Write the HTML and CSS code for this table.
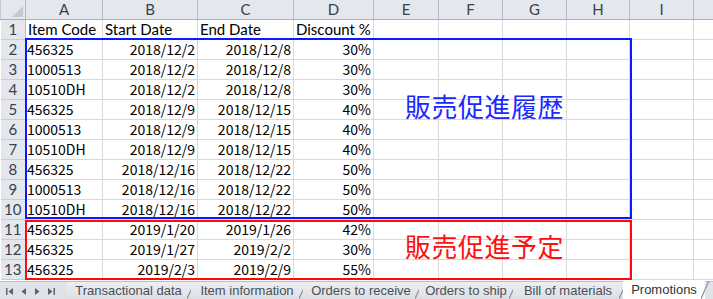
FILE: index.html
```html
<!DOCTYPE html>
<html>
<head>
<meta charset="utf-8">
<link rel="stylesheet" href="styles.css">
</head>
<body>
<div class="sheet">
  <table class="grid">
    <colgroup>
      <col class="w-rh"><col class="w-a"><col class="w-b"><col class="w-c"><col class="w-d"><col class="w-e"><col class="w-f"><col class="w-g"><col class="w-h"><col class="w-i"><col class="w-j">
    </colgroup>
    <thead>
      <tr class="colhead">
        <th class="corner"><span class="tri"></span></th><th>A</th><th>B</th><th>C</th><th>D</th><th>E</th><th>F</th><th>G</th><th>H</th><th>I</th><th class="last"></th>
      </tr>
    </thead>
    <tbody>
      <tr><th>1</th><td class="hd">Item Code</td><td class="hd">Start Date</td><td class="hd">End Date</td><td class="hd">Discount %</td><td></td><td></td><td></td><td></td><td></td><td></td></tr>
      <tr><th>2</th><td>456325</td><td class="r">2018/12/2</td><td class="r">2018/12/8</td><td class="r">30%</td><td></td><td></td><td></td><td></td><td></td><td></td></tr>
      <tr><th>3</th><td>1000513</td><td class="r">2018/12/2</td><td class="r">2018/12/8</td><td class="r">30%</td><td></td><td></td><td></td><td></td><td></td><td></td></tr>
      <tr><th>4</th><td>10510DH</td><td class="r">2018/12/2</td><td class="r">2018/12/8</td><td class="r">30%</td><td></td><td></td><td></td><td></td><td></td><td></td></tr>
      <tr><th>5</th><td>456325</td><td class="r">2018/12/9</td><td class="r">2018/12/15</td><td class="r">40%</td><td></td><td></td><td></td><td></td><td></td><td></td></tr>
      <tr><th>6</th><td>1000513</td><td class="r">2018/12/9</td><td class="r">2018/12/15</td><td class="r">40%</td><td></td><td></td><td></td><td></td><td></td><td></td></tr>
      <tr><th>7</th><td>10510DH</td><td class="r">2018/12/9</td><td class="r">2018/12/15</td><td class="r">40%</td><td></td><td></td><td></td><td></td><td></td><td></td></tr>
      <tr><th>8</th><td>456325</td><td class="r">2018/12/16</td><td class="r">2018/12/22</td><td class="r">50%</td><td></td><td></td><td></td><td></td><td></td><td></td></tr>
      <tr><th>9</th><td>1000513</td><td class="r">2018/12/16</td><td class="r">2018/12/22</td><td class="r">50%</td><td></td><td></td><td></td><td></td><td></td><td></td></tr>
      <tr><th>10</th><td>10510DH</td><td class="r">2018/12/16</td><td class="r">2018/12/22</td><td class="r">50%</td><td></td><td></td><td></td><td></td><td></td><td></td></tr>
      <tr><th>11</th><td>456325</td><td class="r">2019/1/20</td><td class="r">2019/1/26</td><td class="r">42%</td><td></td><td></td><td></td><td></td><td></td><td></td></tr>
      <tr><th>12</th><td>456325</td><td class="r">2019/1/27</td><td class="r">2019/2/2</td><td class="r">30%</td><td></td><td></td><td></td><td></td><td></td><td></td></tr>
      <tr><th>13</th><td>456325</td><td class="r">2019/2/3</td><td class="r">2019/2/9</td><td class="r">55%</td><td></td><td></td><td></td><td></td><td></td><td></td></tr>
    </tbody>
  </table>

  <div class="box box-blue"><span class="label label-blue">販売促進履歴</span></div>
  <div class="box box-red"><span class="label label-red">販売促進予定</span></div>

  <div class="tabbar">
    <div class="nav">
      <span class="nav-btn">
        <svg width="9" height="9" viewBox="0 0 9 9"><rect x="1" y="1" width="1.5" height="7" fill="#5a6470"/><path d="M8 1 L3.5 4.5 L8 8 Z" fill="#5a6470"/></svg>
      </span>
      <span class="nav-btn">
        <svg width="9" height="9" viewBox="0 0 9 9"><path d="M7 1 L2.5 4.5 L7 8 Z" fill="#5a6470"/></svg>
      </span>
      <span class="nav-btn">
        <svg width="9" height="9" viewBox="0 0 9 9"><path d="M2 1 L6.5 4.5 L2 8 Z" fill="#5a6470"/></svg>
      </span>
      <span class="nav-btn">
        <svg width="9" height="9" viewBox="0 0 9 9"><path d="M1 1 L5.5 4.5 L1 8 Z" fill="#5a6470"/><rect x="6.5" y="1" width="1.5" height="7" fill="#5a6470"/></svg>
      </span>
    </div>
    <div class="tabs">
      <span class="tab t1">Transactional data</span>
      <span class="tab t2">Item information</span>
      <span class="tab t3">Orders to receive</span>
      <span class="tab t4">Orders to ship</span>
      <span class="tab t5">Bill of materials</span>
      <span class="tab active">Promotions</span>
    </div>
  </div>
</div>
</body>
</html>
```
FILE: styles.css
```css
html, body {
  margin: 0;
  padding: 0;
  background: #ffffff;
}
.sheet {
  position: relative;
  width: 713px;
  height: 299px;
  overflow: hidden;
  font-family: "Noto Sans CJK JP", "DejaVu Sans", sans-serif;
}
.grid {
  border-collapse: collapse;
  table-layout: fixed;
  width: 733px;
}
.w-rh { width: 25px; }
.w-a { width: 77px; }
.w-b { width: 95px; }
.w-c { width: 96px; }
.w-d { width: 80px; }
.w-e { width: 65px; }
.w-f { width: 64px; }
.w-g { width: 64px; }
.w-h { width: 63px; }
.w-i { width: 64px; }
.w-j { width: 40px; }

.grid th, .grid td {
  height: 19px;
  padding: 0;
  border: 1px solid #d9d9d9;
  overflow: hidden;
  white-space: nowrap;
}
.grid td {
  font-size: 14px;
  line-height: 19px;
  color: #000;
  padding-left: 1px;
  padding-right: 2px;
}
.grid td.r {
  text-align: right;
}
.grid td.hd {
  font-family: "Lato", "Open Sans", sans-serif;
  font-size: 15px;
  padding-left: 2px;
}
.grid th {
  background: #e4e8ee;
  border-color: #b4bcc8;
  font-family: "Lato", "Open Sans", sans-serif;
  font-weight: normal;
  font-size: 15px;
  line-height: 19px;
  color: #3a3f48;
  text-align: center;
}
.grid tbody th {
  border-top-color: #c6ccd6;
  border-bottom-color: #c6ccd6;
  border-left: none;
}
.grid thead th {
  border-top: none;
  border-left-color: #c6ccd6;
  border-right-color: #b4bcc8;
  border-bottom-color: #a9b0bc;
}
.corner {
  position: relative;
}
.tri {
  position: absolute;
  right: 2px;
  bottom: 2px;
  width: 0;
  height: 0;
  border-left: 11px solid transparent;
  border-bottom: 11px solid #c4c9d2;
}

.box {
  position: absolute;
  box-sizing: border-box;
  border: 2px solid;
  display: flex;
  align-items: flex-start;
}
.box-blue {
  left: 25px;
  top: 38px;
  width: 607px;
  height: 181px;
  border-color: #0a1aff;
}
.box-red {
  left: 25px;
  top: 220px;
  width: 607px;
  height: 60px;
  border-color: #ff0a0a;
}
.label {
  margin-left: 378px;
  font-family: "Noto Sans CJK JP", sans-serif;
  font-size: 26px;
  line-height: 30px;
  letter-spacing: 0.5px;
}
.label-blue {
  color: #1a2aff;
  margin-top: 51px;
}
.label-red {
  color: #ff1010;
  margin-top: 9px;
}

.tabbar {
  position: absolute;
  left: 0;
  top: 281px;
  width: 713px;
  height: 18px;
  background: #dfe2e7;
  border-top: 1px solid #b9bec7;
  display: flex;
  align-items: stretch;
}
.nav {
  width: 62px;
  display: flex;
  align-items: center;
  padding-left: 4px;
  gap: 4px;
}
.nav-btn {
  width: 10px;
  display: flex;
  justify-content: center;
}
.tabs {
  display: flex;
  align-items: stretch;
  font-family: "Liberation Sans", "Arial", sans-serif;
  font-size: 13px;
  color: #4a4f58;
}
.tab {
  position: relative;
  box-sizing: border-box;
  display: flex;
  align-items: center;
  justify-content: center;
  white-space: nowrap;
  padding: 0 6px;
  background: linear-gradient(#eceef1, #dcdfe4);
  line-height: 16px;
  height: 17px;
}
.tab::after {
  content: "";
  position: absolute;
  right: -4px;
  top: 0;
  width: 8px;
  height: 100%;
  background: linear-gradient(to top left, transparent 44%, #9aa1ac 48%, #9aa1ac 54%, transparent 58%);
}
.tab.t1 { width: 125px; }
.tab.t2 { width: 112px; }
.tab.t3 { width: 116px; }
.tab.t4 { width: 94px; }
.tab.t5 { width: 110px; }
.tab.active {
  background: #ffffff;
  color: #333;
  margin-top: -1px;
  height: 18px;
  width: 82px;
}
```
